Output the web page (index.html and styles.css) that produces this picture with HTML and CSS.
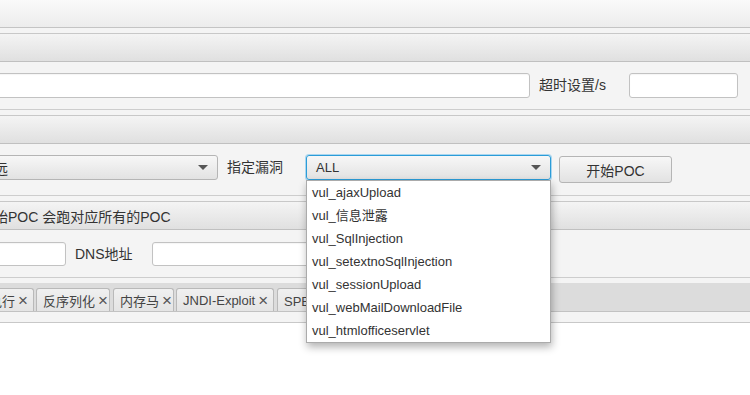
FILE: index.html
```html
<!DOCTYPE html>
<html lang="zh-CN">
<head>
    <meta charset="UTF-8">
    <title>POC</title>
    <link rel="stylesheet" href="styles.css">
</head>
<body>
    <div class="menuBar"></div>

    <!-- 目标设置 -->
    <section class="pane">
        <div class="paneTitle"></div>
        <div class="paneBody rowTarget">
            <input type="text" class="field urlField">
            <label class="label timeoutLabel">超时设置/s</label>
            <input type="text" class="field timeoutField">
        </div>
    </section>

    <!-- 漏洞选择 -->
    <section class="pane">
        <div class="paneTitle"></div>
        <div class="paneBody rowVul">
            <div class="combo typeCombo"><span class="comboText cutText">远</span><span class="arrow"></span></div>
            <span class="label vulLabel">指定漏洞</span>
            <div class="combo vulCombo focused">
                <span class="comboText">ALL</span><span class="arrow"></span>
                <ul class="popup">
                    <li>vul_ajaxUpload</li>
                    <li>vul_信息泄露</li>
                    <li>vul_SqlInjection</li>
                    <li>vul_setextnoSqlInjection</li>
                    <li>vul_sessionUpload</li>
                    <li>vul_webMailDownloadFile</li>
                    <li>vul_htmlofficeservlet</li>
                </ul>
            </div>
            <button class="btn">开始POC</button>
        </div>
    </section>

    <!-- DNS -->
    <section class="pane">
        <div class="paneTitle"><span class="titleText">始POC 会跑对应所有的POC</span></div>
        <div class="paneBody rowDns">
            <input type="text" class="field dnsLeftField">
            <span class="label dnsLabel">DNS地址</span>
            <input type="text" class="field dnsField">
        </div>
    </section>

    <div class="tabPane">
        <div class="tabHeader">
            <div class="tab tabExec">执行<span class="close">×</span></div>
            <div class="tab tabDeser">反序列化<span class="close">×</span></div>
            <div class="tab tabMem">内存马<span class="close">×</span></div>
            <div class="tab tabJndi">JNDI-Exploit<span class="close">×</span></div>
            <div class="tab tabSpel">SPEL注入<span class="close">×</span></div>
        </div>
        <div class="tabStrip"></div>
        <div class="tabBody"></div>
    </div>
</body>
</html>
```

FILE: styles.css
```css
body {
    margin: 0;
    background: #f4f4f4;
    font-family: "Liberation Sans", "Noto Sans CJK SC", sans-serif;
    font-size: 13px;
    color: #333;
    overflow: hidden;
    height: 395px;
}

.menuBar {
    height: 27px;
    background: linear-gradient(#fafafa, #ececec);
    border-bottom: 1px solid #c4c4c4;
}

.pane {
    margin-top: 5px;
}
.paneTitle {
    height: 27px;
    border-top: 1px solid #c8c8c8;
    border-bottom: 1px solid #c0c0c0;
    background: linear-gradient(#f4f4f4, #e0e0e0);
    display: flex;
    align-items: center;
    overflow: hidden;
}
.titleText {
    margin-left: -6px;
    font-size: 14px;
    white-space: nowrap;
}
.paneBody {
    display: flex;
    align-items: flex-start;
    border-bottom: 1px solid #cdcdcd;
}

.field {
    box-sizing: border-box;
    height: 25px;
    margin: 0;
    border: 1px solid #c2c2c2;
    border-radius: 3px;
    background: #fff;
    box-shadow: inset 0 1px 1px rgba(0,0,0,0.04);
    font: inherit;
}
.label {
    font-size: 14px;
    line-height: 25px;
    white-space: nowrap;
}

/* 第一行 */
.rowTarget {
    height: 25px;
    padding: 11px 0;
}
.urlField {
    width: 540px;
    margin-left: -10px;
}
.timeoutLabel {
    width: 90px;
    margin-left: 9px;
}
.timeoutField {
    width: 109px;
}

/* 第二行 */
.rowVul {
    height: 28px;
    padding: 11px 0 12px 0;
}
.combo {
    box-sizing: border-box;
    height: 25px;
    border: 1px solid #b5b5b5;
    border-radius: 3px;
    background: linear-gradient(#f7f7f7, #e2e2e2);
    display: flex;
    align-items: center;
    justify-content: space-between;
    padding: 0 9px;
    position: relative;
}
.comboText {
    white-space: nowrap;
}
.cutText {
    margin-left: 3px;
    font-size: 14px;
}
.arrow {
    width: 0;
    height: 0;
    border-left: 5px solid transparent;
    border-right: 5px solid transparent;
    border-top: 5px solid #555;
}
.typeCombo {
    width: 228px;
    margin-left: -10px;
    padding-left: 0;
}
.vulLabel {
    width: 79px;
    margin-left: 9px;
}
.vulCombo {
    width: 245px;
}
.focused {
    border-color: #2b9cd8;
    box-shadow: 0 0 0 1px #a9d6ef;
}
.btn {
    box-sizing: border-box;
    width: 113px;
    height: 27px;
    margin: 1px 0 0 8px;
    border: 1px solid #b5b5b5;
    border-radius: 3px;
    background: linear-gradient(#f7f7f7, #e2e2e2);
    font-family: inherit;
    font-size: 14px;
    color: #333;
}

.popup {
    position: absolute;
    top: 24px;
    left: -1px;
    width: 245px;
    box-sizing: border-box;
    margin: 0;
    padding: 0;
    list-style: none;
    background: #fff;
    border: 1px solid #ababab;
    box-shadow: 1px 4px 8px rgba(0,0,0,0.3);
    z-index: 5;
}
.popup li {
    height: 23px;
    line-height: 23px;
    padding-left: 5px;
    white-space: nowrap;
}

/* 第三行 */
.rowDns {
    height: 24px;
    padding: 12px 0 11px 0;
}
.rowDns .field {
    height: 24px;
}
.dnsLeftField {
    width: 76px;
    margin-left: -10px;
}
.dnsLabel {
    width: 77px;
    margin-left: 9px;
    line-height: 24px;
}
.dnsField {
    width: 250px;
}

/* 标签页 */
.tabPane {
    padding-top: 5px;
}
.tabHeader {
    display: flex;
    align-items: flex-end;
    height: 23px;
    padding-top: 5px;
    background: #dcdcdc;
    border-bottom: 1px solid #c2c2c2;
    overflow: hidden;
}
.tab {
    box-sizing: border-box;
    flex: none;
    height: 23px;
    padding: 0 8px 0 6px;
    border: 1px solid #b9b9b9;
    border-bottom: none;
    border-radius: 3px 3px 0 0;
    background: linear-gradient(#f0f0f0, #e4e4e4);
    display: flex;
    align-items: center;
    justify-content: space-between;
    white-space: nowrap;
    font-size: 13px;
    color: #444;
}
.tabExec {
    width: 52px;
    margin-left: -18px;
    margin-right: 2px;
}
.tabDeser {
    width: 74px;
    margin-right: 3px;
}
.tabMem {
    width: 61px;
    margin-right: 2px;
}
.tabJndi {
    width: 98px;
    margin-right: 3px;
}
.tabSpel {
    width: 90px;
}
.close {
    margin-left: 3px;
    font-size: 17px;
    line-height: 1;
    color: #555;
}
.tabStrip {
    height: 10px;
    background: #f4f4f4;
    border-bottom: 1px solid #c8c8c8;
}
.tabBody {
    height: 80px;
    background: #fff;
}
```
